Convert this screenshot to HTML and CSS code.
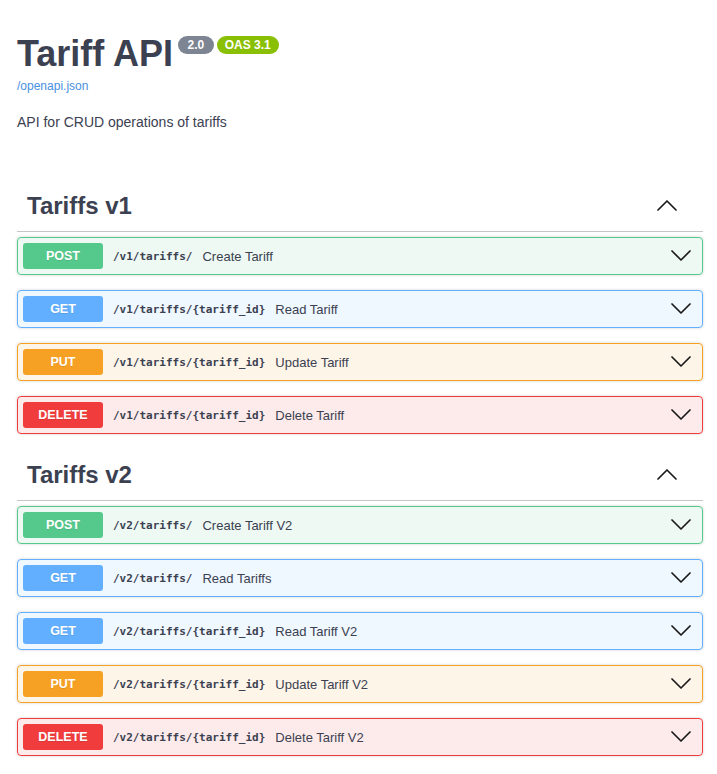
FILE: index.html
```html
<!DOCTYPE html>
<html lang="en">
<head>
<meta charset="utf-8">
<title>Tariff API</title>
<link rel="stylesheet" href="styles.css">
</head>
<body>
<div class="wrapper">
  <div class="info">
    <div class="title-row">
      <h2 class="title">Tariff API</h2>
      <span class="badge badge-version">2.0</span>
      <span class="badge badge-oas">OAS 3.1</span>
    </div>
    <a class="spec-link" href="#">/openapi.json</a>
    <p class="description">API for CRUD operations of tariffs</p>
  </div>

  <section class="tag-section">
    <h3 class="tag-header">
      <span class="tag-name">Tariffs v1</span>
      <svg class="chev" width="20" height="20" viewBox="0 0 20 20"><polyline points="1,14 10,5 19,14"/></svg>
    </h3>
    <div class="opblock post">
      <span class="method">POST</span>
      <span class="path">/v1/tariffs/</span>
      <span class="summary">Create Tariff</span>
      <svg class="chev down" width="20" height="20" viewBox="0 0 20 20"><polyline points="1,5 10,14 19,5"/></svg>
    </div>
    <div class="opblock get">
      <span class="method">GET</span>
      <span class="path">/v1/tariffs/{tariff_id}</span>
      <span class="summary">Read Tariff</span>
      <svg class="chev down" width="20" height="20" viewBox="0 0 20 20"><polyline points="1,5 10,14 19,5"/></svg>
    </div>
    <div class="opblock put">
      <span class="method">PUT</span>
      <span class="path">/v1/tariffs/{tariff_id}</span>
      <span class="summary">Update Tariff</span>
      <svg class="chev down" width="20" height="20" viewBox="0 0 20 20"><polyline points="1,5 10,14 19,5"/></svg>
    </div>
    <div class="opblock delete">
      <span class="method">DELETE</span>
      <span class="path">/v1/tariffs/{tariff_id}</span>
      <span class="summary">Delete Tariff</span>
      <svg class="chev down" width="20" height="20" viewBox="0 0 20 20"><polyline points="1,5 10,14 19,5"/></svg>
    </div>
  </section>

  <section class="tag-section">
    <h3 class="tag-header">
      <span class="tag-name">Tariffs v2</span>
      <svg class="chev" width="20" height="20" viewBox="0 0 20 20"><polyline points="1,14 10,5 19,14"/></svg>
    </h3>
    <div class="opblock post">
      <span class="method">POST</span>
      <span class="path">/v2/tariffs/</span>
      <span class="summary">Create Tariff V2</span>
      <svg class="chev down" width="20" height="20" viewBox="0 0 20 20"><polyline points="1,5 10,14 19,5"/></svg>
    </div>
    <div class="opblock get">
      <span class="method">GET</span>
      <span class="path">/v2/tariffs/</span>
      <span class="summary">Read Tariffs</span>
      <svg class="chev down" width="20" height="20" viewBox="0 0 20 20"><polyline points="1,5 10,14 19,5"/></svg>
    </div>
    <div class="opblock get">
      <span class="method">GET</span>
      <span class="path">/v2/tariffs/{tariff_id}</span>
      <span class="summary">Read Tariff V2</span>
      <svg class="chev down" width="20" height="20" viewBox="0 0 20 20"><polyline points="1,5 10,14 19,5"/></svg>
    </div>
    <div class="opblock put">
      <span class="method">PUT</span>
      <span class="path">/v2/tariffs/{tariff_id}</span>
      <span class="summary">Update Tariff V2</span>
      <svg class="chev down" width="20" height="20" viewBox="0 0 20 20"><polyline points="1,5 10,14 19,5"/></svg>
    </div>
    <div class="opblock delete">
      <span class="method">DELETE</span>
      <span class="path">/v2/tariffs/{tariff_id}</span>
      <span class="summary">Delete Tariff V2</span>
      <svg class="chev down" width="20" height="20" viewBox="0 0 20 20"><polyline points="1,5 10,14 19,5"/></svg>
    </div>
  </section>
</div>
</body>
</html>
```

FILE: styles.css
```css
html, body {
  margin: 0;
  padding: 0;
  background: #ffffff;
}

body {
  font-family: "Liberation Sans", Arial, sans-serif;
  color: #3b4151;
}

.wrapper {
  padding: 0 14px 20px 17px;
}

.info {
  padding-top: 36px;
}

.title-row {
  display: flex;
  align-items: flex-start;
}

.title {
  margin: 0;
  font-size: 36px;
  line-height: 36px;
  font-weight: bold;
  color: #3b4151;
}

.badge {
  height: 18px;
  line-height: 18px;
  font-size: 12px;
  font-weight: bold;
  color: #ffffff;
  border-radius: 9px;
  padding: 0 8px;
}

.badge-version {
  background: #7d8492;
  margin-left: 5px;
  padding: 0 9.5px;
}

.badge-oas {
  background: #89bf04;
  margin-left: 3px;
}

.spec-link {
  display: block;
  margin-top: 6px;
  font-size: 12px;
  line-height: 16px;
  color: #4990e2;
  text-decoration: none;
}

.description {
  margin: 18px 0 0;
  font-size: 14px;
  line-height: 20px;
  color: #3b4151;
}

.tag-section:first-of-type {
  margin-top: 48px;
}

.tag-header {
  display: flex;
  align-items: center;
  justify-content: space-between;
  margin: 0 0 5px;
  padding: 10px 26px 10px 10px;
  height: 31px;
  border-bottom: 1px solid rgba(59, 65, 81, 0.3);
  font-size: 24px;
  line-height: 31px;
  font-weight: bold;
  color: #3b4151;
}

.chev {
  display: block;
  flex: none;
}

.chev polyline {
  fill: none;
  stroke: #1b1b1b;
  stroke-width: 1.7;
  stroke-linecap: round;
  stroke-linejoin: round;
}

.opblock {
  display: flex;
  align-items: center;
  height: 26px;
  padding: 5px;
  margin: 0 0 15px;
  border: 1px solid #000;
  border-radius: 4px;
  box-shadow: 0 0 3px rgba(0, 0, 0, 0.19);
}

.method {
  flex: none;
  width: 80px;
  height: 26px;
  line-height: 26px;
  text-align: center;
  border-radius: 3px;
  font-size: 12.5px;
  font-weight: bold;
  color: #ffffff;
  text-shadow: 0 1px 0 rgba(0, 0, 0, 0.1);
}

.path {
  padding: 0 10px;
  font-family: "DejaVu Sans Mono", "Liberation Mono", monospace;
  font-size: 11px;
  font-weight: 600;
  color: #3b4151;
  white-space: nowrap;
}

.summary {
  flex: 1;
  font-size: 13px;
  color: #3b4151;
  white-space: nowrap;
}

.chev.down {
  margin-right: 6px;
}

.opblock.post {
  border-color: #55c98c;
  background: rgba(85, 201, 140, 0.1);
}
.opblock.post .method { background: #55c98c; }

.opblock.get {
  border-color: #61affe;
  background: rgba(97, 175, 254, 0.1);
}
.opblock.get .method { background: #61affe; }

.opblock.put {
  border-color: #f6a123;
  background: rgba(246, 161, 35, 0.1);
}
.opblock.put .method { background: #f6a123; }

.opblock.delete {
  border-color: #f03c3c;
  background: rgba(240, 60, 60, 0.1);
}
.opblock.delete .method { background: #f03c3c; }
```
